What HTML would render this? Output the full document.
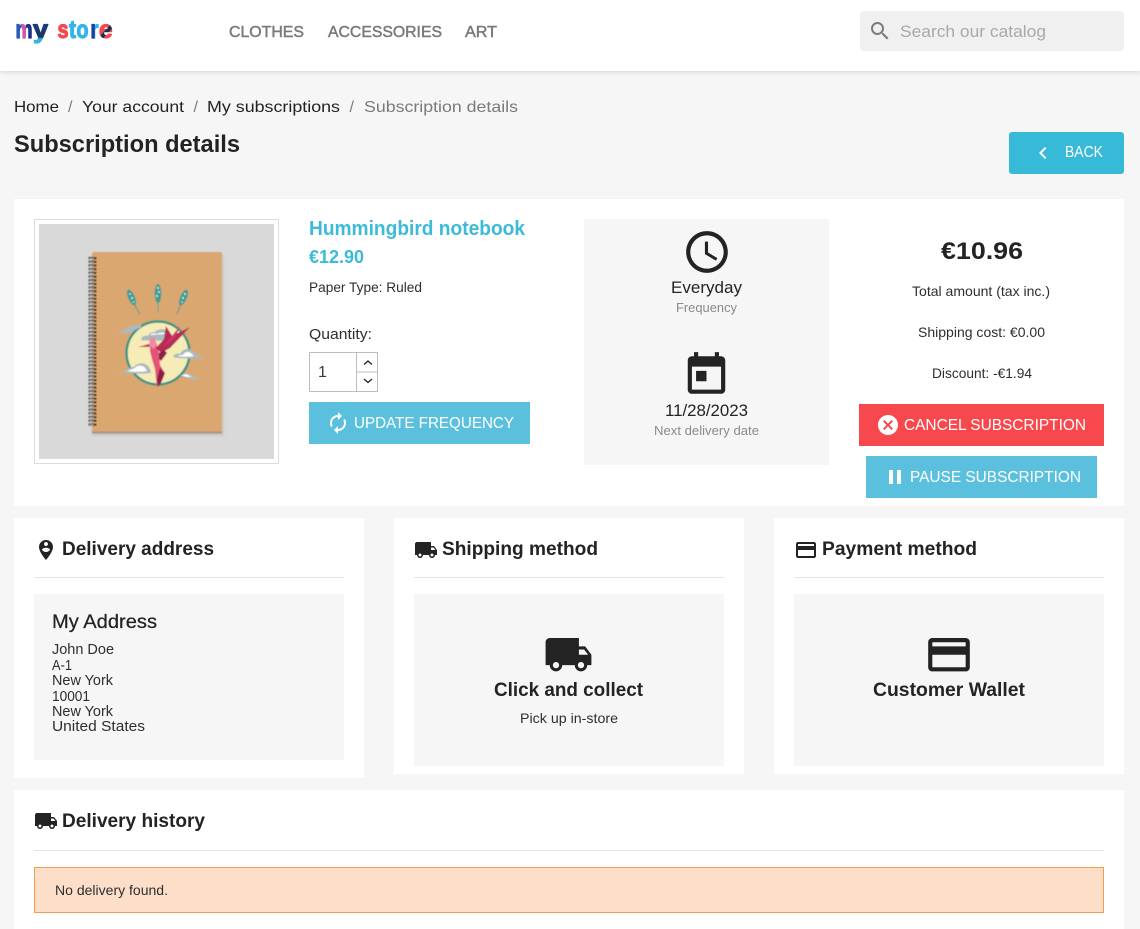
<!DOCTYPE html>
<html lang="en">
<head>
<meta charset="utf-8">
<title>Subscription details</title>
<style>
html,body{margin:0;padding:0;background:#f6f6f6;width:1140px;height:929px;overflow:hidden}
svg{display:block;position:absolute;left:0;top:0}
text{font-family:"Liberation Sans",sans-serif;fill:#232323;font-size:14px}
.b{font-weight:bold}
.m{stroke:currentColor;stroke-width:.25px}
.nav{font-size:16px;fill:#7a7a7a;color:#7a7a7a;stroke:#7a7a7a;stroke-width:.5px}
.bc{font-size:16px}
.h{font-size:19px;font-weight:bold}
.btn{font-size:16px;fill:#fff}
.g{fill:#8a8a8a;font-size:13px}
.s{font-size:13px;fill:#2e2e2e}
.ad{font-size:14.5px;fill:#2e2e2e}
.ic{fill:#232323}
.lg{font-weight:bold;font-size:25px;stroke-width:1.2px;stroke-linejoin:round}
</style>
</head>
<body>
<svg width="1140" height="929" viewBox="0 0 1140 929" xmlns="http://www.w3.org/2000/svg">
<defs>
<filter id="sh" x="-5%" y="-50%" width="110%" height="200%"><feDropShadow dx="0" dy="1" stdDeviation="2.5" flood-color="#000" flood-opacity=".14"/></filter>
<filter id="soft" x="-10%" y="-10%" width="120%" height="120%"><feGaussianBlur stdDeviation=".4"/></filter>
<filter id="nbs" x="-10%" y="-10%" width="120%" height="120%"><feGaussianBlur stdDeviation="1.5"/></filter>
<linearGradient id="lm" gradientUnits="userSpaceOnUse" x1="15" x2="32" y1="0" y2="0"><stop offset="0" stop-color="#2b6dc8"/><stop offset=".3" stop-color="#2b4fb0"/><stop offset=".42" stop-color="#d35aa8"/><stop offset=".62" stop-color="#c65aa8"/><stop offset=".68" stop-color="#1b2f8c"/><stop offset="1" stop-color="#1b2f8c"/></linearGradient>
<linearGradient id="ly" gradientUnits="userSpaceOnUse" x1="0" x2="0" y1="25" y2="46"><stop offset="0" stop-color="#1d3a7c"/><stop offset=".58" stop-color="#17385e"/><stop offset=".66" stop-color="#35b5e5"/><stop offset="1" stop-color="#35b5e5"/></linearGradient>
<linearGradient id="lr" gradientUnits="userSpaceOnUse" x1="90" x2="98" y1="0" y2="0"><stop offset="0" stop-color="#1c3ea0"/><stop offset=".55" stop-color="#1c3ea0"/><stop offset=".65" stop-color="#35b5e5"/><stop offset="1" stop-color="#35b5e5"/></linearGradient>
<linearGradient id="le" gradientUnits="userSpaceOnUse" x1="99" x2="112" y1="26" y2="38"><stop offset="0" stop-color="#f5484e"/><stop offset=".4" stop-color="#f5484e"/><stop offset=".45" stop-color="#14324f"/><stop offset=".62" stop-color="#14324f"/><stop offset=".67" stop-color="#f5484e"/><stop offset="1" stop-color="#f5484e"/></linearGradient>
</defs>

<!-- header -->
<rect x="0" y="0" width="1140" height="71" fill="#fff" filter="url(#sh)"/>
<text x="15.500" y="38" class="lg" style="fill:url(#lm);stroke:url(#lm)" textLength="17" lengthAdjust="spacingAndGlyphs">m</text>
<text x="33" y="38" class="lg" style="fill:url(#ly);stroke:url(#ly)" textLength="15" lengthAdjust="spacingAndGlyphs">y</text>
<text x="57.500" y="38" class="lg" style="fill:#f5484e;stroke:#f5484e" textLength="11" lengthAdjust="spacingAndGlyphs">s</text>
<text x="69" y="38" class="lg" style="fill:#35b5e5;stroke:#35b5e5" textLength="7" lengthAdjust="spacingAndGlyphs">t</text>
<text x="76.500" y="38" class="lg" style="fill:#35b5e5;stroke:#35b5e5" textLength="12" lengthAdjust="spacingAndGlyphs">o</text>
<text x="90.500" y="38" class="lg" style="fill:url(#lr);stroke:url(#lr)" textLength="8" lengthAdjust="spacingAndGlyphs">r</text>
<text x="99" y="38" class="lg" style="fill:url(#le);stroke:url(#le)" textLength="13.500" lengthAdjust="spacingAndGlyphs">e</text>

<text x="229" y="37" class="nav" textLength="75" lengthAdjust="spacingAndGlyphs">CLOTHES</text>
<text x="328" y="37" class="nav" textLength="114" lengthAdjust="spacingAndGlyphs">ACCESSORIES</text>
<text x="465" y="37" class="nav" textLength="32" lengthAdjust="spacingAndGlyphs">ART</text>

<rect x="860" y="11" width="264" height="40" rx="4" fill="#f0f0f0"/>
<path transform="translate(868 19)" fill="#7a7a7a" d="M15.5 14h-.79l-.28-.27C15.41 12.59 16 11.11 16 9.5 16 5.91 13.09 3 9.5 3S3 5.91 3 9.5 5.91 16 9.5 16c1.61 0 3.09-.59 4.23-1.57l.27.28v.79l5 4.99L20.49 19l-4.99-5zm-6 0C7.01 14 5 11.99 5 9.5S7.01 5 9.5 5 14 7.01 14 9.5 11.99 14 9.5 14z"/>
<text x="900" y="37" style="font-size:16.5px;fill:#a9a9a9" textLength="146" lengthAdjust="spacingAndGlyphs">Search our catalog</text>

<!-- breadcrumb -->
<text x="14" y="112" class="bc" textLength="45" lengthAdjust="spacingAndGlyphs">Home</text>
<text x="68" y="112" class="bc" style="fill:#7a7a7a">/</text>
<text x="82" y="112" class="bc" textLength="102" lengthAdjust="spacingAndGlyphs">Your account</text>
<text x="193.500" y="112" class="bc" style="fill:#7a7a7a">/</text>
<text x="207" y="112" class="bc" textLength="133" lengthAdjust="spacingAndGlyphs">My subscriptions</text>
<text x="349.500" y="112" class="bc" style="fill:#7a7a7a">/</text>
<text x="364" y="112" class="bc" style="fill:#7a7a7a" textLength="154" lengthAdjust="spacingAndGlyphs">Subscription details</text>

<text x="14" y="152" class="b" style="font-size:24px" textLength="226" lengthAdjust="spacingAndGlyphs">Subscription details</text>

<rect x="1009" y="132" width="115" height="42" rx="3" fill="#37b9d8"/>
<path transform="translate(1031 141)" fill="#fff" d="M15.41 7.41L14 6l-6 6 6 6 1.41-1.41L10.83 12z"/>
<text x="1065" y="157" class="btn" style="font-size:15.5px" textLength="38" lengthAdjust="spacingAndGlyphs">BACK</text>

<!-- card 1 -->
<rect x="14" y="199" width="1110" height="307" fill="#fff"/>
<rect x="34.500" y="219.500" width="244" height="244" fill="#fff" stroke="#dddddd"/>
<rect x="39" y="224" width="235" height="235" fill="#d9d9d9"/>
<g filter="url(#soft)">
  <rect x="92" y="256" width="131" height="179" fill="#a8a8a8" opacity=".5" filter="url(#nbs)"/>
  <rect x="92" y="252" width="130" height="181" rx="2" fill="#dba76f"/>
  <rect x="92" y="431.500" width="130" height="2" fill="#a89582"/>
  <!-- spiral -->
  <path stroke-dasharray="2.2 1.5" d="M92.500 257V427" stroke-width="8" stroke="#3b3b3b" fill="none"/>
  <path stroke-dasharray="1.1 2.6" d="M91.500 258V427" stroke-width="4.500" stroke="#a9a9a9" fill="none"/>
  <!-- feathers -->
  <g fill="#3a9d96" stroke="#3a9d96">
    <ellipse cx="131.500" cy="297.500" rx="3.300" ry="8.500" transform="rotate(-24 131.500 297.500)" stroke="none"/>
    <path d="M134 304l6 10" stroke-width="1" fill="none"/>
    <ellipse cx="158" cy="293.500" rx="3.300" ry="9.500" stroke="none"/>
    <path d="M158 302v10" stroke-width="1" fill="none"/>
    <ellipse cx="183.500" cy="297.500" rx="3.300" ry="8.500" transform="rotate(24 183.500 297.500)" stroke="none"/>
    <path d="M181 304l-4 10" stroke-width="1" fill="none"/>
  </g>
  <g fill="#dcefe9">
    <circle cx="130" cy="294" r=".9"/><circle cx="132" cy="298" r="1"/><circle cx="133.500" cy="302" r=".8"/>
    <circle cx="158" cy="288" r="1"/><circle cx="159" cy="292" r="1"/><circle cx="157" cy="296" r="1"/>
    <circle cx="185" cy="294" r="1"/><circle cx="183" cy="298" r="1"/><circle cx="182" cy="302" r=".8"/>
  </g>
  <!-- sun circle -->
  <circle cx="158" cy="353" r="31.500" fill="#f5ecb6" stroke="#3a9486" stroke-width="2.500"/>
  <!-- clouds -->
  <g fill="#a9bac0">
    <path d="M118 333c3-.5 5-2 8-4 3-3 8-4 13-4 3 0 3 2 1 3-4 1-6 3-9 4-4 1.500-9 2-13 1z"/>
    <path d="M141 340c0-3 3-5 7-4 1-3 4-4 7-4 2-3 9-4 13-1 3 2 4 5 8 8-6 2-28 2-35 1z"/>
    <path d="M118 372c4 0 7-1 10-3 1-2 4-2 6-2 2-3 7-5 11-3 4 2 6 6 6 9-8 1-24 1-33-1z"/>
    <path d="M173 357c1-3 4-4 7-3 2-3 4-5 8-5 4 0 6 3 8 5 2 1 5 3 9 4-10 1-24 1-32-1z"/>
    <path d="M180 375c2 0 4-1 5-2 4 0 8 4 15 5-6 2-15 1-20-3z"/>
  </g>
  <g fill="#ffffff">
    <path d="M178 356c1-1 3-1 5-1 1-2 3-3 5-3 3 0 4 3 6 4-5 1-11 1-16 0z"/>
    <path d="M127 371c3-1 6-2 8-3 1-2 5-3 7-2 3 1 4 3 5 5-6 1-14 1-20 0z"/>
    <path d="M182 375l4-1c2 1 4 2 6 3-4 0-8 0-10-2z"/>
    <path d="M150 335c2-2 5-2 7-1 3-2 7-2 9 0-4 0-12 1-16 1z"/>
  </g>
  <!-- bird -->
  <path fill="#e5527a" d="M150 338l4-1 3 8 2 8 1 12 4 7-3 9-4 6-2-18-3-10-2-8z"/>
  <path fill="#ef8aa6" d="M150 338l-1 8 5 3 3-4-3-8z"/>
  <path fill="#b62a57" d="M156 348l5 5 9-5 20-21-18 9-6-10-2 13z"/>
  <path fill="#cf3562" d="M162 348l10-12 8-10-5 12z"/>
  <path fill="#8e1f44" d="M159 353l5-3 3 3-6 8-2-2z"/>
  <path fill="#8e1f44" d="M160 368l5 5-4 10-3 4-1-8z"/>
  <path fill="#c9335d" d="M149 344l-11 3 12 0z"/>
</g>

<!-- product -->
<text x="309" y="235" class="b" style="font-size:20px;fill:#3bbbd9" textLength="216" lengthAdjust="spacingAndGlyphs">Hummingbird notebook</text>
<text x="309" y="263" class="b" style="font-size:18px;fill:#3bbbd9" textLength="55" lengthAdjust="spacingAndGlyphs">€12.90</text>
<text x="309" y="292" class="s" style="font-size:14px" textLength="113" lengthAdjust="spacingAndGlyphs">Paper Type: Ruled</text>
<text x="309" y="339" class="s" style="font-size:15px" textLength="63" lengthAdjust="spacingAndGlyphs">Quantity:</text>
<rect x="309.500" y="352.500" width="68" height="39" fill="#fff" stroke="#bdbdbd"/>
<path d="M356.500 352.500V391.500M357 372H377" stroke="#bdbdbd" fill="none"/>
<path d="M364 364.500l4-3.500 4 3.500M364 379l4 3.500 4-3.500" stroke="#232323" stroke-width="1.300" fill="none"/>
<text x="318" y="377" style="font-size:16px;fill:#3a3a3a">1</text>
<rect x="309" y="402" width="221" height="42" fill="#5bc0de"/>
<path transform="translate(326 411)" fill="#fff" d="M12 6v3l4-4-4-4v3c-4.420 0-8 3.580-8 8 0 1.570.46 3.030 1.240 4.260L6.700 14.800c-.45-.83-.7-1.790-.7-2.800 0-3.310 2.690-6 6-6zm6.760 1.740L17.300 9.200c.44.84.7 1.790.7 2.800 0 3.310-2.690 6-6 6v-3l-4 4 4 4v-3c4.420 0 8-3.580 8-8 0-1.570-.46-3.030-1.240-4.260z"/>
<text x="354" y="428" class="btn" textLength="160" lengthAdjust="spacingAndGlyphs">UPDATE FREQUENCY</text>

<!-- frequency -->
<rect x="584" y="219" width="245" height="246" fill="#f6f6f6"/>
<path class="ic" transform="translate(682 227) scale(2.083)" d="M11.990 2C6.470 2 2 6.480 2 12s4.470 10 9.990 10C17.520 22 22 17.520 22 12S17.520 2 11.990 2zM12 20c-4.420 0-8-3.580-8-8s3.580-8 8-8 8 3.580 8 8-3.580 8-8 8zm.5-13H11v6l5.250 3.150.75-1.230-4.500-2.670z"/>
<text x="671" y="293" style="font-size:17px" textLength="71" lengthAdjust="spacingAndGlyphs">Everyday</text>
<text x="676" y="312" class="g" textLength="61" lengthAdjust="spacingAndGlyphs">Frequency</text>
<path class="ic" transform="translate(681.500 350) scale(2.083)" d="M19 3h-1V1h-2v2H8V1H6v2H5c-1.110 0-1.990.9-1.990 2L3 19c0 1.100.89 2 2 2h14c1.100 0 2-.9 2-2V5c0-1.100-.9-2-2-2zm0 16H5V8h14v11zM7 10h5v5H7z"/>
<text x="665" y="416" style="font-size:17px" textLength="83" lengthAdjust="spacingAndGlyphs">11/28/2023</text>
<text x="654" y="435" class="g" textLength="105" lengthAdjust="spacingAndGlyphs">Next delivery date</text>

<!-- totals -->
<text x="941" y="259" class="b" style="font-size:24px" textLength="82" lengthAdjust="spacingAndGlyphs">€10.96</text>
<text x="912" y="296" class="s" style="font-size:14px" textLength="138" lengthAdjust="spacingAndGlyphs">Total amount (tax inc.)</text>
<text x="918" y="337" class="s" style="font-size:14px" textLength="127" lengthAdjust="spacingAndGlyphs">Shipping cost: €0.00</text>
<text x="932" y="378" class="s" style="font-size:14px" textLength="100" lengthAdjust="spacingAndGlyphs">Discount: -€1.94</text>
<rect x="859" y="404" width="245" height="42" fill="#f7484e"/>
<path transform="translate(876 413)" fill="#fff" d="M12 2C6.470 2 2 6.470 2 12s4.470 10 10 10 10-4.470 10-10S17.530 2 12 2zm5 13.590L15.590 17 12 13.410 8.410 17 7 15.590 10.590 12 7 8.410 8.410 7 12 10.590 15.590 7 17 8.410 13.410 12 17 15.590z"/>
<text x="904" y="430" class="btn" textLength="182" lengthAdjust="spacingAndGlyphs">CANCEL SUBSCRIPTION</text>
<rect x="866" y="456" width="231" height="42" fill="#5bc0de"/>
<rect x="889" y="470" width="4" height="14" fill="#fff"/>
<rect x="897" y="470" width="4" height="14" fill="#fff"/>
<text x="910" y="482" class="btn" textLength="171" lengthAdjust="spacingAndGlyphs">PAUSE SUBSCRIPTION</text>

<!-- delivery address -->
<rect x="14" y="518" width="350" height="260" fill="#fff"/>
<path class="ic" transform="translate(34 538)" d="M12 2C8.140 2 5 5.140 5 9c0 5.250 7 13 7 13s7-7.750 7-13c0-3.860-3.140-7-7-7zm0 2c1.100 0 2 .9 2 2 0 1.110-.9 2-2 2s-2-.89-2-2c0-1.100.9-2 2-2zm0 10c-1.670 0-3.140-.85-4-2.150.02-1.320 2.670-2.050 4-2.050s3.980.73 4 2.050c-.86 1.300-2.330 2.150-4 2.150z"/>
<text x="62" y="555" class="h" textLength="152" lengthAdjust="spacingAndGlyphs">Delivery address</text>
<rect x="34" y="577" width="310" height="1" fill="#e4e4e4"/>
<rect x="34" y="594" width="310" height="166" fill="#f6f6f6"/>
<text x="52" y="628" class="m" style="font-size:19px;color:#232323" textLength="105" lengthAdjust="spacingAndGlyphs">My Address</text>
<text x="52" y="654" class="ad" textLength="62" lengthAdjust="spacingAndGlyphs">John Doe</text>
<text x="52" y="670" class="ad" textLength="20" lengthAdjust="spacingAndGlyphs">A-1</text>
<text x="52" y="685" class="ad" textLength="61" lengthAdjust="spacingAndGlyphs">New York</text>
<text x="52" y="701" class="ad" textLength="38" lengthAdjust="spacingAndGlyphs">10001</text>
<text x="52" y="716" class="ad" textLength="61" lengthAdjust="spacingAndGlyphs">New York</text>
<text x="52" y="731" class="ad" textLength="93" lengthAdjust="spacingAndGlyphs">United States</text>

<!-- shipping -->
<rect x="394" y="518" width="350" height="256" fill="#fff"/>
<path class="ic" transform="translate(414 538)" d="M20 8h-3V4H3c-1.100 0-2 .9-2 2v11h2c0 1.660 1.340 3 3 3s3-1.340 3-3h6c0 1.660 1.340 3 3 3s3-1.340 3-3h2v-5l-3-4zM6 18.500c-.83 0-1.500-.67-1.500-1.500s.67-1.500 1.500-1.500 1.500.67 1.500 1.500-.67 1.500-1.500 1.500zm13.500-9l1.960 2.500H17V9.500h2.500zm-1.500 9c-.83 0-1.500-.67-1.500-1.500s.67-1.500 1.500-1.500 1.500.67 1.500 1.500-.67 1.500-1.500 1.500z"/>
<text x="442" y="555" class="h" textLength="156" lengthAdjust="spacingAndGlyphs">Shipping method</text>
<rect x="414" y="577" width="310" height="1" fill="#e4e4e4"/>
<rect x="414" y="594" width="310" height="172" fill="#f6f6f6"/>
<path class="ic" transform="translate(543.500 629.700) scale(2.083)" d="M20 8h-3V4H3c-1.100 0-2 .9-2 2v11h2c0 1.660 1.340 3 3 3s3-1.340 3-3h6c0 1.660 1.340 3 3 3s3-1.340 3-3h2v-5l-3-4zM6 18.500c-.83 0-1.500-.67-1.500-1.500s.67-1.500 1.500-1.500 1.500.67 1.500 1.500-.67 1.500-1.500 1.500zm13.500-9l1.960 2.500H17V9.500h2.500zm-1.500 9c-.83 0-1.500-.67-1.500-1.500s.67-1.500 1.500-1.500 1.500.67 1.500 1.500-.67 1.500-1.500 1.500z"/>
<text x="494" y="696" class="h" textLength="149" lengthAdjust="spacingAndGlyphs">Click and collect</text>
<text x="520" y="723" class="s" style="font-size:14px" textLength="98" lengthAdjust="spacingAndGlyphs">Pick up in-store</text>

<!-- payment -->
<rect x="774" y="518" width="350" height="256" fill="#fff"/>
<path class="ic" transform="translate(794 538)" d="M20 4H4c-1.110 0-1.990.89-1.990 2L2 18c0 1.110.89 2 2 2h16c1.110 0 2-.89 2-2V6c0-1.110-.89-2-2-2zm0 14H4v-6h16v6zm0-10H4V6h16v2z"/>
<text x="822" y="555" class="h" textLength="155" lengthAdjust="spacingAndGlyphs">Payment method</text>
<rect x="794" y="577" width="310" height="1" fill="#e4e4e4"/>
<rect x="794" y="594" width="310" height="172" fill="#f6f6f6"/>
<path class="ic" transform="translate(924 629.700) scale(2.083)" d="M20 4H4c-1.110 0-1.990.89-1.990 2L2 18c0 1.110.89 2 2 2h16c1.110 0 2-.89 2-2V6c0-1.110-.89-2-2-2zm0 14H4v-6h16v6zm0-10H4V6h16v2z"/>
<text x="873" y="696" class="h" textLength="152" lengthAdjust="spacingAndGlyphs">Customer Wallet</text>

<!-- history -->
<rect x="14" y="790" width="1110" height="139" fill="#fff"/>
<path class="ic" transform="translate(34 809)" d="M20 8h-3V4H3c-1.100 0-2 .9-2 2v11h2c0 1.660 1.340 3 3 3s3-1.340 3-3h6c0 1.660 1.340 3 3 3s3-1.340 3-3h2v-5l-3-4zM6 18.500c-.83 0-1.500-.67-1.500-1.500s.67-1.500 1.500-1.500 1.500.67 1.500 1.500-.67 1.500-1.500 1.500zm13.500-9l1.960 2.500H17V9.500h2.500zm-1.500 9c-.83 0-1.500-.67-1.500-1.500s.67-1.500 1.500-1.500 1.500.67 1.500 1.500-.67 1.500-1.500 1.500z"/>
<text x="62" y="827" class="h" textLength="143" lengthAdjust="spacingAndGlyphs">Delivery history</text>
<rect x="34" y="850" width="1070" height="1" fill="#e4e4e4"/>
<rect x="34.500" y="867.500" width="1069" height="45" fill="#fddfc9" stroke="#f39d51"/>
<text x="55" y="895" class="s" style="font-size:14px" textLength="113" lengthAdjust="spacingAndGlyphs">No delivery found.</text>
</svg>
</body>
</html>
